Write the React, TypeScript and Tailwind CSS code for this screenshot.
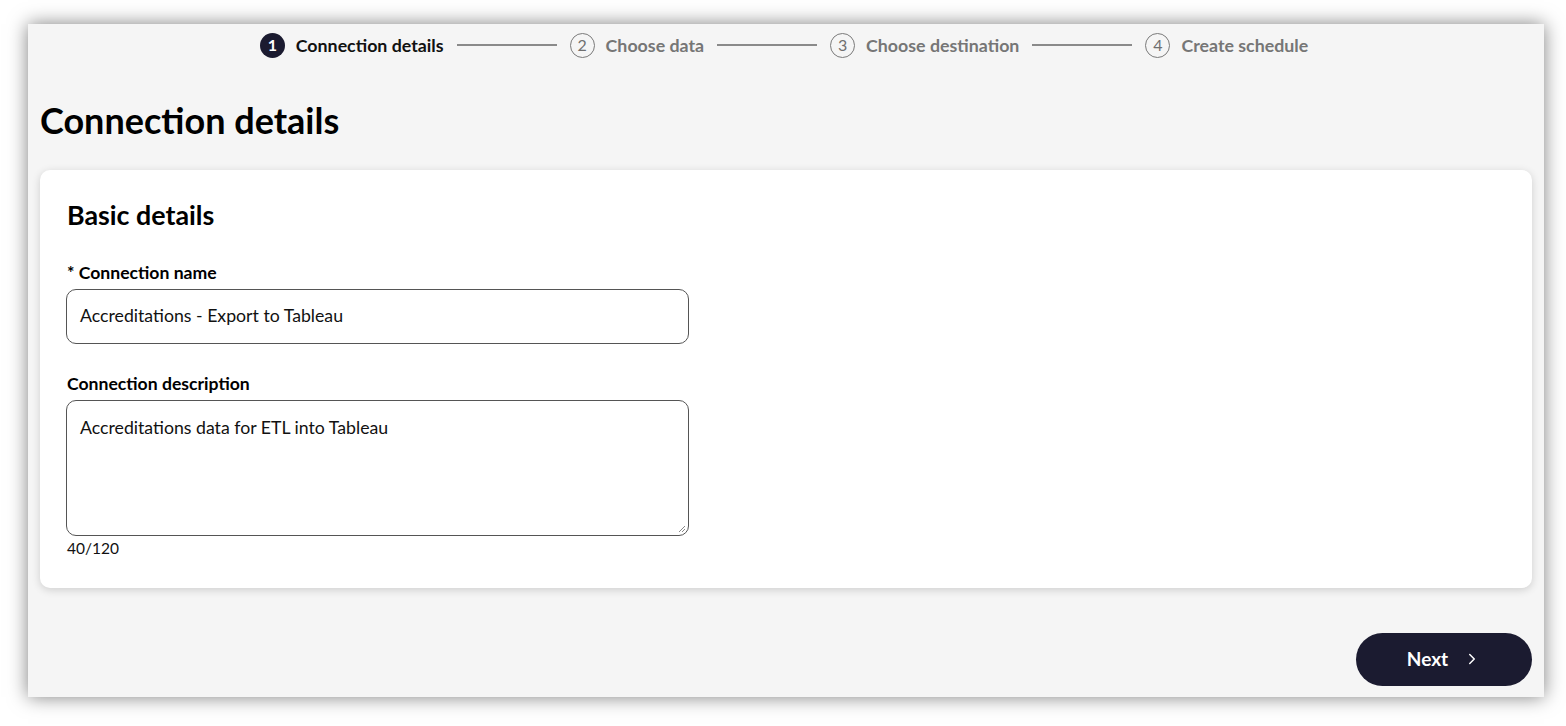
import { ChevronRight } from 'lucide-react';

const steps = [
  { n: 1, label: 'Connection details', active: true },
  { n: 2, label: 'Choose data', active: false },
  { n: 3, label: 'Choose destination', active: false },
  { n: 4, label: 'Create schedule', active: false },
];

function Stepper() {
  return (
    <div className="flex items-center justify-center pt-[8px] pr-[4px]">
      {steps.map((s, i) => (
        <div key={s.n} className="flex items-center">
          {i > 0 && <div className="w-[100px] h-[2px] bg-[#8a8a8a] mx-[13px]" />}
          <div className="flex items-center gap-[11px]">
            {s.active ? (
              <span className="w-[25px] h-[25px] rounded-full bg-[#1b1b30] text-white text-[16px] font-bold flex items-center justify-center">
                {s.n}
              </span>
            ) : (
              <span className="w-[25px] h-[25px] rounded-full border border-[#7a7a7a] text-[#6f6f6f] text-[16px] flex items-center justify-center">
                {s.n}
              </span>
            )}
            <span className={`text-[17.8px] font-bold ${s.active ? 'text-[#111]' : 'text-[#767676]'}`}>{s.label}</span>
          </div>
        </div>
      ))}
    </div>
  );
}

export default function App() {
  return (
    <div className="w-[1566px] h-[726px] bg-white pt-[24px] pl-[28px] font-['Lato',sans-serif] text-[#111]">
      <div className="w-[1516px] h-[673px] bg-[#f5f5f5] shadow-[0_0_18px_rgba(0,0,0,0.5)] px-[12px] flex flex-col">
        <Stepper />

        <h1 className="mt-[39px] text-[36px] leading-[44px] font-bold text-black">Connection details</h1>

        <div className="mt-[28px] bg-white rounded-[10px] shadow-[0_2px_8px_rgba(0,0,0,0.16)] px-[26px] pt-[27px] pb-[30px]">
          <h2 className="pl-[1px] text-[26.8px] leading-[36px] font-bold text-black">Basic details</h2>

          <label className="block pl-[1px] mt-[29px] text-[17.6px] leading-[22px] font-bold text-black">* Connection name</label>
          <div className="mt-[5px] w-[623px] h-[55px] border border-[#555] rounded-[10px] flex items-center px-[13px] text-[17.7px]">
            Accreditations - Export to Tableau
          </div>

          <label className="block pl-[1px] mt-[29px] text-[17.6px] leading-[22px] font-bold text-black">Connection description</label>
          <div className="relative mt-[5px] w-[623px] h-[136px] border border-[#555] rounded-[10px] px-[13px] pt-[16px] text-[17.7px] leading-[22px]">
            Accreditations data for ETL into Tableau
            <svg className="absolute right-[2px] bottom-[2px]" width="9" height="9" viewBox="0 0 9 9">
              <path d="M8 2 L2 8 M8 5 L5 8" stroke="#888" strokeWidth="1" fill="none" />
            </svg>
          </div>
          <div className="pl-[1px] mt-[2px] text-[15.5px] leading-[20px]">40/120</div>
        </div>

        <div className="mt-[45px] flex justify-end">
          <button className="w-[176px] h-[53px] rounded-full bg-[#1b1b30] text-white flex items-center justify-center gap-[15px] text-[19px] font-bold">
            <span>Next</span>
            <ChevronRight size={18} strokeWidth={2} />
          </button>
        </div>
      </div>
    </div>
  );
}
